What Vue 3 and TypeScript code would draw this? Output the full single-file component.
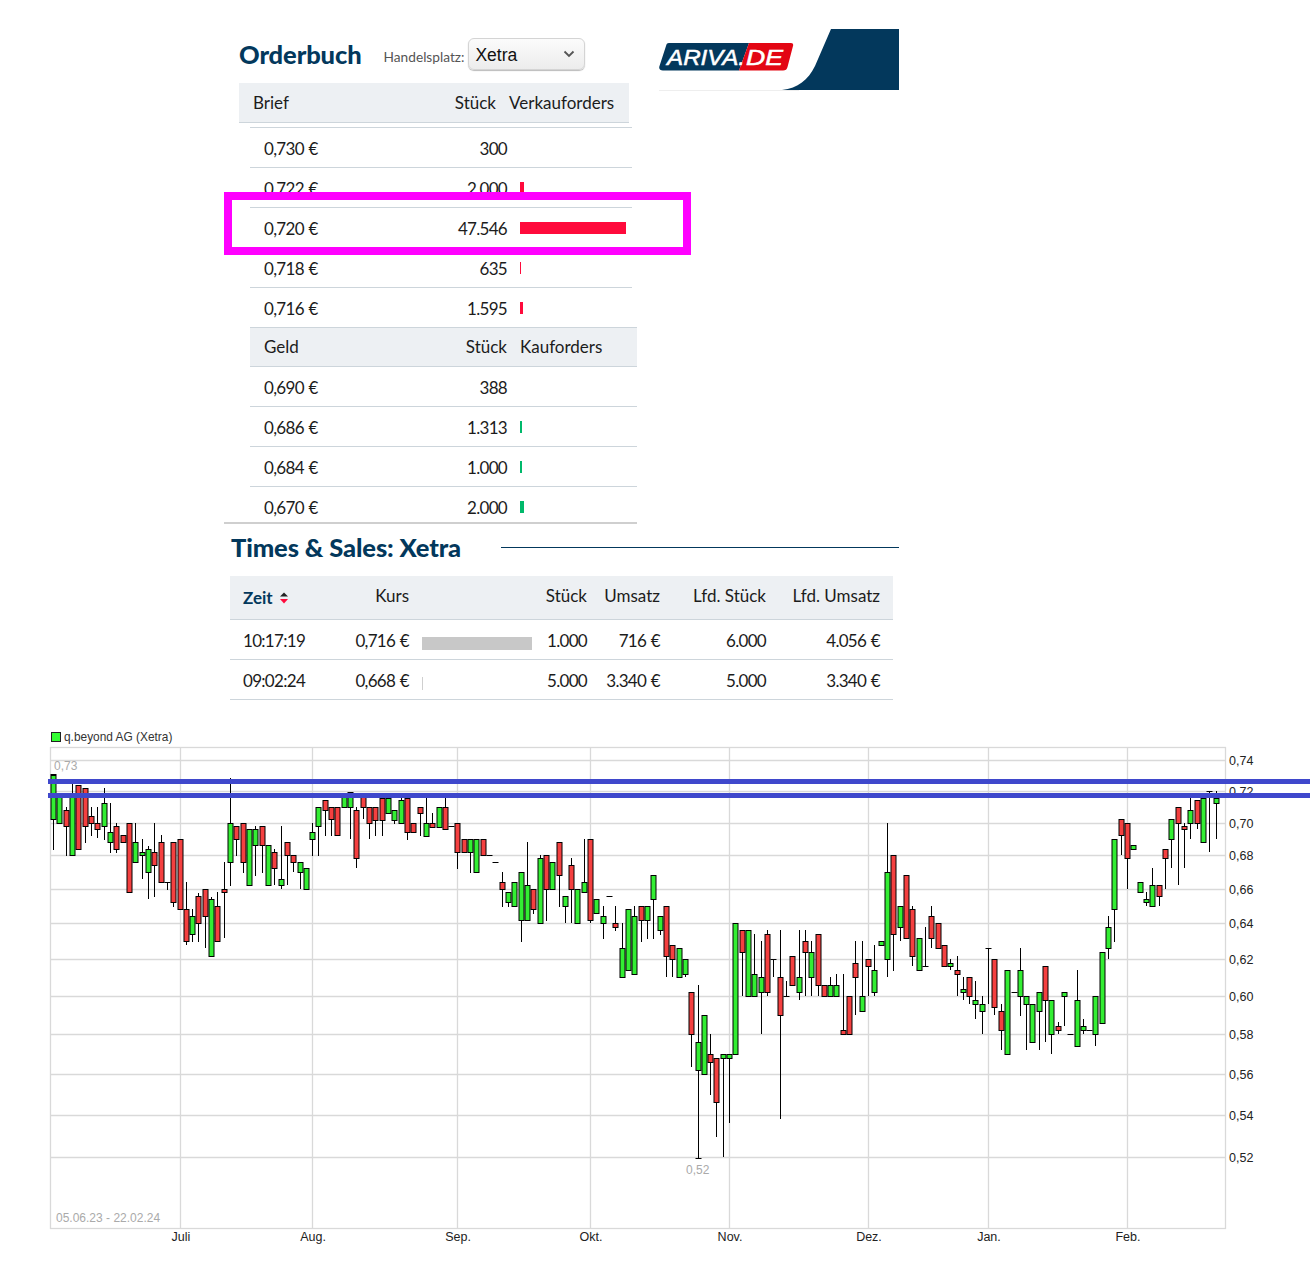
<script setup lang="ts">
type C = [number, number, number, number, number?, number?];
type Row = { price: string; qty: string; n: number };

const asks: Row[] = [
  { price: '0,730 €', qty: '300', n: 300 },
  { price: '0,722 €', qty: '2.000', n: 2000 },
  { price: '0,720 €', qty: '47.546', n: 47546 },
  { price: '0,718 €', qty: '635', n: 635 },
  { price: '0,716 €', qty: '1.595', n: 1595 },
];
const bids: Row[] = [
  { price: '0,690 €', qty: '388', n: 388 },
  { price: '0,686 €', qty: '1.313', n: 1313 },
  { price: '0,684 €', qty: '1.000', n: 1000 },
  { price: '0,670 €', qty: '2.000', n: 2000 },
];
const barW = (n: number) => (n < 500 ? 0 : Math.floor(n / 448.5));

const trades = [
  { t: '10:17:19', k: '0,716 €', w: 110, c: '#c8c8c8', s: '1.000', u: '716 €', ls: '6.000', lu: '4.056 €' },
  { t: '09:02:24', k: '0,668 €', w: 1, c: '#cfcfcf', s: '5.000', u: '3.340 €', ls: '5.000', lu: '3.340 €' },
];

const hLines: [number, string][] = [
  [760, '0,74'], [791, '0,72'], [823, '0,70'], [855, '0,68'], [889, '0,66'], [923, '0,64'],
  [959, '0,62'], [996, '0,60'], [1034, '0,58'], [1074, '0,56'], [1115, '0,54'], [1157, '0,52'],
];
const vLines: [number, string][] = [
  [180, 'Juli'], [312, 'Aug.'], [457, 'Sep.'], [590, 'Okt.'], [729, 'Nov.'], [868, 'Dez.'], [988, 'Jan.'], [1127, 'Feb.'],
];

// [x, bodyTop, bodyBottom, green?, wickTop, wickBottom] in 3x coordinates of each region
const a: C[] = [
  [39,150,283,1,148,375],[39,148,148,1],[57,215,295,1],[78,256,304,0,245,392],[96,205,391,1,175,391],[114,181,373,0],
  [135,190,304,0,190,353],[153,274,295,0,245,332],[171,295,313,0,245,340],[192,235,304,1,190,345],[210,322,352,1,235,383],
  [228,304,373,0,295,383],[249,331,352,0],[267,295,502,0],[285,352,412,1,295,412],[306,382,391,1,342,463],[324,373,442,1,362,523],
  [342,382,421,0,295,515],[363,352,472,0,330,472],[381,472,472,0,472,495],[399,352,532,0,352,545],[420,343,553,0],
  [438,553,649,0,472,660],[456,574,628,1,553,650],[474,514,595,0,505,650],[495,493,574,0,493,670],[513,523,694,1,515,694],
  [531,544,649,0,502,649],[552,493,502,0,412,640],[570,295,412,1,160,482],[588,304,343,0,304,392],[609,295,412,0,295,443],
  [627,313,481,1],[645,313,361,1,304,452],[666,304,361,0,304,443],[684,361,481,1],[702,382,430,0,373,481],[723,463,481,1,304,493],
  [741,352,391,0,352,481],[759,391,412,0,391,442],[780,412,442,1,412,493],[798,430,493,1],[816,322,343,1,295,392],
  [834,247,304,1,247,392],[855,226,256,0,226,332],[873,247,283,0,247,332],[891,247,331,0],[912,205,247,1],[930,200,247,1,200,343],
  [948,256,400,0,247,430],[969,205,247,0,205,283],[987,247,295,0,247,343],
];
const b: C[] = [
  [15,112,149,0,112,197],[36,84,149,0,84,197],[54,84,130,1],[72,121,149,1,121,161],[93,91,160,1,84,160],[111,84,187,0,84,209],
  [129,160,187,0],[150,112,130,0,112,197],[168,160,197,1,84,197],[186,160,170,0,130,170],[207,112,170,1],[225,112,178,0,84,178],
  [243,169,169,0],[261,160,247,0,160,296],[282,208,247,0],[300,208,247,1,208,308],[318,208,307,1],[339,208,256,0],[357,256,256,0],
  [375,277,277,0],[396,337,358,0,307,410],[414,367,397,1,367,410],[432,337,409,1],[453,307,451,1,307,515],[471,346,451,1,217,451],
  [489,358,418,0,358,431],[510,265,460,1,255,460],[528,256,358,0,256,452],[546,277,358,1],[567,217,316,0,217,410],[585,379,409,1,379,460],
  [603,286,358,0,265,460],[621,358,460,1],[642,337,367,1,208,367],[660,208,451,0,208,460],[678,388,430,1],[699,439,460,1,408,506],
  [717,379,379,0],[735,460,472,0,408,482],[756,535,622,1,460,622],[774,418,601,1],[792,439,613,1,408,613],[813,409,451,0,409,515],
  [831,409,451,1,409,506],[849,316,388,1,316,506],[870,439,481,1,439,494],[888,409,559,0,409,622],[906,526,568,0,526,622],
  [927,535,622,1],[945,568,613,1,568,622],
];
const c: C[] = [
  [33,577,703,0,577,800],[54,727,811,1,556,1075],[54,1075,1075,0],[72,646,823,1],[90,763,787,0,703,884],[108,775,907,0,775,1010],
  [129,763,775,1,763,1072],[147,763,775,1,763,970],[165,370,763,1],[186,391,457,0,391,589],[204,391,589,1],[222,523,589,1,403,589],
  [243,532,577,1,424,703],[261,403,577,0,391,589],[279,478,478,0,478,532],[300,532,646,0,391,958],[318,589,589,0,544,589],[336,469,556,0],
  [357,532,577,1,391,601],[375,424,457,0,391,589],[393,457,532,1,424,589],[414,403,556,0,403,589],[432,556,589,0],[450,556,589,1,532,589],
  [468,556,589,1,523,589],[489,691,703,0,523,703],[507,589,703,0],[525,490,532,0,424,646],[546,589,634,1,424,634],[564,478,499,0,478,589],
  [582,511,577,1,436,589],[603,424,436,1],[621,217,478,1,70,532],[639,166,403,0,166,512],[660,319,382,1,319,424],[678,226,415,0],
  [696,328,469,0,319,499],[717,415,511,1],[735,499,499,0,382,499],[753,349,415,0,319,445],[774,370,445,0],[792,436,499,0],
  [810,490,499,1,478,511],[831,511,523,0,469,589],[849,568,577,1,532,601],[867,532,589,0,532,613],[885,601,613,1,544,658],
  [906,613,634,1,589,703],[924,445,445,0,445,613],[942,478,622,0,478,646],[963,634,691,0,613,751],[981,511,763,1],
];
const d: C[] = [
  [102,667,667,0],[120,601,679,1,535,737],[138,679,703,1,679,841],[156,703,817,1],[177,667,724,1,667,841],[195,589,691,0,589,817],
  [213,691,793,1,691,853],[234,769,781,0,757,793],[252,667,679,1,667,769],[270,793,793,0],[291,691,829,1,601,829],[309,769,781,1,748,793],
  [327,781,781,0],[345,679,793,1,679,829],[366,547,760,1],[384,472,535,1,439,568],[402,208,418,1,208,515],[423,148,196,0,148,256],
  [441,160,265,0,160,358],[459,226,238,1],[480,337,367,1],[498,388,397,1,367,409],[516,346,409,1,295,409],[537,346,379,0,346,409],
  [555,238,265,0,238,358],[573,148,208,1,148,295],[594,112,160,0,112,346],[612,169,178,0,160,295],[630,121,160,1,84,208],
  [651,91,160,0,91,178],[669,84,217,1],[687,64,64,0,64,247],[708,84,100,1,64,208],
];

const conv = (list: C[], ox: number, oy: number) =>
  list.map(([x, t, bt, g, wt, wb]) => ({
    x: Math.round(ox + x / 3) + 0.5,
    top: Math.round(oy + t / 3) + 0.5,
    bot: Math.round(oy + bt / 3) + 0.5,
    green: g === 1,
    wt: wt === undefined ? null : Math.round(oy + wt / 3),
    wb: wb === undefined ? null : Math.round(oy + wb / 3),
  }));
const candles = [...conv(a, 40, 725), ...conv(b, 370, 770), ...conv(c, 680, 800), ...conv(d, 980, 770)];
</script>

<template>
  <div class="page">
    <div class="top">
      <section class="book">
        <div class="titlebar">
          <h2 class="title">Orderbuch</h2>
          <span class="venue-label">Handelsplatz:</span>
          <div class="select">
            <span class="select-value">Xetra</span>
            <svg width="12" height="8" viewBox="0 0 12 8"><path d="M1.5 1.5 6 6l4.500-4.500" fill="none" stroke="#555" stroke-width="1.800" /></svg>
          </div>
        </div>
        <div class="band row brief-head">
          <span>Brief</span><span class="r">Stück</span><span>Verkauforders</span>
        </div>
        <div class="rows asks">
          <div v-for="x in asks" :key="x.price" class="row line">
            <span class="num">{{ x.price }}</span><span class="r num">{{ x.qty }}</span>
            <span class="bar red" :style="{ width: barW(x.n) + 'px' }"></span>
          </div>
        </div>
        <div class="band row geld-head">
          <span>Geld</span><span class="r">Stück</span><span>Kauforders</span>
        </div>
        <div class="rows bids">
          <div v-for="x in bids" :key="x.price" class="row line">
            <span class="num">{{ x.price }}</span><span class="r num">{{ x.qty }}</span>
            <span class="bar green" :style="{ width: barW(x.n) + 'px' }"></span>
          </div>
        </div>
        <div class="highlight"></div>
      </section>

      <svg class="logo" width="240" height="62" viewBox="659 29 240 62">
        <rect x="659" y="90" width="140" height="1" fill="#eeeeee" />
        <path d="M831 29H899V90H782C798 88 808 80 815 66Z" fill="#03385c" />
        <path d="M667 43H749L739 70.500H663C660 70.500 658.500 68.500 659.500 66L666 46C666.500 44 667 43 669 43Z" fill="#03385c" />
        <path d="M749 43H791C793 43 793.500 44.500 793 46L787.500 67C787 69.500 785.500 70.500 783 70.500H739Z" fill="#e30613" />
        <text class="logo-t" x="667" y="65" textLength="78" lengthAdjust="spacingAndGlyphs">ARIVA.</text>
        <text class="logo-t" x="746" y="65" textLength="37" lengthAdjust="spacingAndGlyphs">DE</text>
      </svg>
    </div>

    <section class="ts">
      <div class="ts-title">
        <h2 class="title big">Times &amp; Sales: Xetra</h2>
        <span class="rule"></span>
      </div>
      <div class="ts-row ts-head">
        <span class="zeit">Zeit
          <svg width="10" height="12" viewBox="0 0 10 12">
            <path d="M1 4.500 5 .5l4 4Z" fill="#222" />
            <path d="M1 7h8l-4 4.500Z" fill="#ff0a3c" />
          </svg>
        </span>
        <span class="r">Kurs</span><span></span>
        <span class="r">Stück</span><span class="r">Umsatz</span><span class="r">Lfd. Stück</span><span class="r">Lfd. Umsatz</span>
      </div>
      <div v-for="t in trades" :key="t.t" class="ts-row ts-line">
        <span class="num">{{ t.t }}</span><span class="r num">{{ t.k }}</span>
        <span class="vol"><i :style="{ width: t.w + 'px', background: t.c }"></i></span>
        <span class="r num">{{ t.s }}</span><span class="r num">{{ t.u }}</span><span class="r num">{{ t.ls }}</span><span class="r num">{{ t.lu }}</span>
      </div>
    </section>

    <svg class="chart" width="1310" height="561" viewBox="0 725 1310 561">
      <rect x="51.500" y="732.500" width="9" height="9" fill="#33ff33" stroke="#222" />
      <text class="legend" x="64" y="741">q.beyond AG (Xetra)</text>

      <g stroke="#d9d9d9" stroke-width="1.300">
        <line v-for="h in hLines" :key="h[1]" x1="50" x2="1225" :y1="h[0] + 0.5" :y2="h[0] + 0.5" />
        <line v-for="v in vLines" :key="v[1]" :x1="v[0] + 0.5" :x2="v[0] + 0.5" y1="747" y2="1228" />
        <rect x="50.500" y="747.500" width="1175" height="481" fill="none" />
      </g>

      <g v-for="(k, i) in candles" :key="i">
        <line v-if="k.wt !== null" :x1="k.x" :x2="k.x" :y1="k.wt" :y2="k.wb ?? 0" stroke="#000" stroke-width="1" />
        <line v-if="k.top === k.bot" :x1="k.x - 3" :x2="k.x + 3" :y1="k.top" :y2="k.top" stroke="#000" stroke-width="1" />
        <rect v-else :x="k.x - 2.500" :y="k.top" width="5" :height="k.bot - k.top" :fill="k.green ? '#33ee33' : '#f44040'" stroke="#000" stroke-width="1" />
      </g>

      <text class="note" x="54" y="770">0,73</text>
      <text class="note" x="686" y="1174">0,52</text>
      <text class="note" x="56" y="1222">05.06.23 - 22.02.24</text>

      <text v-for="h in hLines" :key="'y' + h[1]" class="axis" x="1229" :y="h[0] + 4.500">{{ h[1] }}</text>
      <text v-for="v in vLines" :key="'x' + v[1]" class="axis mid" :x="v[0] + 1" y="1241">{{ v[1] }}</text>

      <rect x="48" y="779" width="1262" height="5" fill="#3f48cc" />
      <rect x="48" y="793" width="1262" height="5" fill="#3f48cc" />
    </svg>
  </div>
</template>

<style>
html, body { margin: 0; background: #fff; }
</style>

<style scoped>
.page {
  width: 1310px;
  height: 1286px;
  overflow: hidden;
  font-family: Lato, "Noto Sans", sans-serif;
  font-size: 17px;
  color: #1c1c1c;
}
.top {
  display: flex;
  align-items: flex-start;
  margin-left: 224px;
}
.book {
  position: relative;
  width: 413px;
  border-bottom: 2px solid #cfcfcf;
  height: 522px;
}
.titlebar {
  display: flex;
  align-items: center;
  height: 83px;
  padding: 25px 0 0 15px;
  box-sizing: border-box;
}
.title {
  margin: 0;
  font-size: 25.500px;
  font-weight: 900;
  color: #03385c;
  line-height: 1;
  letter-spacing: -0.1px;
}
.titlebar .title { margin-top: 2px; }
.venue-label {
  margin-left: 22px;
  margin-top: 5px;
  font-size: 13.700px;
  color: #555;
}
.select {
  display: flex;
  align-items: center;
  justify-content: space-between;
  width: 117px;
  height: 32px;
  margin-left: 4px;
  margin-top: 0;
  padding: 0 9px 0 6px;
  box-sizing: border-box;
  border: 1px solid #d4d4d4;
  border-radius: 6px;
  background: linear-gradient(#fbfbfb, #ececec);
  box-shadow: 0 1px 1px #bbb;
  font-family: "Liberation Sans", sans-serif;
  font-size: 17.500px;
  color: #111;
}
.select-value { padding-top: 2px; }
.row {
  display: grid;
  grid-template-columns: 117px 113px auto;
  column-gap: 13px;
  padding-left: 14px;
  align-items: center;
  box-sizing: border-box;
}
.r { text-align: right; }
.num { letter-spacing: -0.7px; word-spacing: 1px; padding-top: 1px; }
.band { background: #edf0f3; border-bottom: 1px solid #cdd5db; }
.brief-head {
  margin-left: 15px;
  width: 390px;
  height: 40px;
  padding-bottom: 1px;
}
.rows { margin-left: 26px; }
.asks {
  width: 382px;
  margin-top: 4px;
  border-top: 1px solid #cdd5db;
}
.line { height: 40px; border-bottom: 1px solid #cdd5db; }
.geld-head {
  margin-left: 26px;
  width: 387px;
  height: 40px;
  margin-top: -1px;
  padding-bottom: 1px;
  background: #edf0f3;
  border-top: 1px solid #cdd5db;
}
.bids { width: 387px; height: 156px; overflow: hidden; }
.bar { display: block; height: 12px; }
.bar.red { background: #ff0a3c; }
.bar.green { background: #00b96b; }
.highlight {
  position: absolute;
  left: 0;
  top: 192px;
  width: 467px;
  height: 63px;
  box-sizing: border-box;
  border: 8px solid #ff00ff;
}
.logo { display: block; margin: 29px 0 0 22px; }
.logo-t {
  font-family: "Liberation Sans", sans-serif;
  font-style: italic;
  font-size: 22px;
  fill: #fff;
  stroke: #fff;
  stroke-width: 0.5px;
}
.ts { margin-left: 230px; width: 669px; }
.ts-title {
  display: flex;
  align-items: center;
  height: 52px;
  padding-bottom: 5px;
  box-sizing: border-box;
}
.big { margin-left: 1px; white-space: nowrap; }
.rule { display: block; flex: 1; height: 1px; background: #03385c; margin: 0 0 1px 40px; }
.ts-row {
  display: grid;
  grid-template-columns: 90px 76px 123px 55px 73px 106px 114px;
  width: 663px;
  padding: 0 13px;
  box-sizing: border-box;
  align-items: center;
  border-bottom: 1px solid #cdd5db;
}
.ts-head { background: #edf0f3; height: 44px; padding-bottom: 4px; }
.ts-line { height: 40px; }
.zeit {
  display: flex;
  align-items: center;
  gap: 6px;
  margin-top: 4px;
  color: #03385c;
  font-weight: 700;
}
.vol { padding-left: 13px; padding-top: 7px; display: flex; align-items: center; }
.vol i { display: block; height: 13px; }
.chart { display: block; margin-top: 25px; }
.legend { font: 11.900px "Liberation Sans", sans-serif; fill: #333; }
.note { font: 12px "Liberation Sans", sans-serif; fill: #aaa; }
.axis { font: 12.500px "Liberation Sans", sans-serif; fill: #222; }
.mid { text-anchor: middle; }
</style>
